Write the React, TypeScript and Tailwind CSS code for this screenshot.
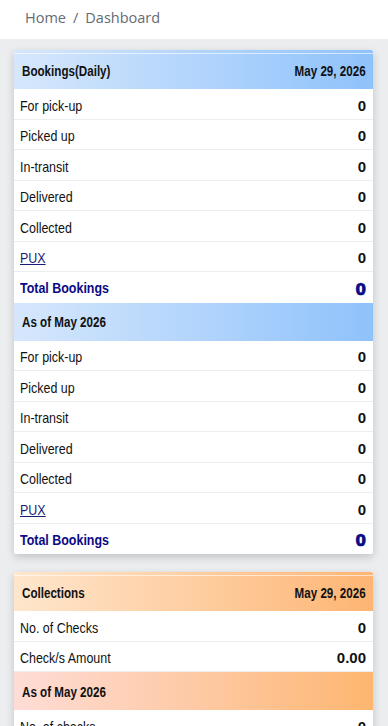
import type { ReactNode } from "react";

type Row = { label: string; value: string; link?: boolean };

const bookingRows: Row[] = [
  { label: "For pick-up", value: "0" },
  { label: "Picked up", value: "0" },
  { label: "In-transit", value: "0" },
  { label: "Delivered", value: "0" },
  { label: "Collected", value: "0" },
  { label: "PUX", value: "0", link: true },
];

// condensed look of the original table font
const narrowL = "inline-block origin-left scale-x-[0.83] font-['Liberation_Sans',Arial,sans-serif]";
const narrowR = "inline-block origin-right scale-x-[0.83] font-['Liberation_Sans',Arial,sans-serif]";

function SectionHeader({
  title,
  date,
  tone,
  first = false,
}: {
  title: string;
  date?: string;
  tone: "blue" | "orange" | "peach";
  first?: boolean;
}) {
  const bg =
    tone === "blue"
      ? "bg-gradient-to-r from-[#d6e7fc] to-[#8fc2fb]"
      : tone === "orange"
        ? "bg-gradient-to-r from-[#fee6cc] to-[#fdb573]"
        : "bg-gradient-to-r from-[#fedcd6] to-[#fdb66f]";
  return (
    <div
      className={`flex items-center justify-between pl-2 pr-[7px] text-[14px] font-bold text-[#111] ${bg} ${
        first ? "h-[39px] pt-[4px]" : "h-[38px] pt-[2px]"
      }`}
    >
      <span className={narrowL}>{title}</span>
      {date && <span className={narrowR}>{date}</span>}
    </div>
  );
}

function DataRow({ label, value, link }: Row) {
  return (
    <div className="flex h-[30.5px] items-center justify-between border-b border-[#eaeef3] pl-[6px] pr-[7px] pt-[4px]">
      <span className={`text-[15px] ${narrowL} ${link ? "text-[#1b1b78] underline" : "text-[#111]"}`}>
        {label}
      </span>
      <span className="font-['Liberation_Sans',Arial,sans-serif] text-[15px] font-bold text-[#111]">
        {value}
      </span>
    </div>
  );
}

function TotalRow() {
  return (
    <div className="flex h-[30.5px] items-center justify-between pl-[6px] pr-[7px] pt-[2px]">
      <span className={`text-[15px] font-bold text-[#0b0b86] ${narrowL}`}>Total Bookings</span>
      <span className="inline-block translate-y-[2px] font-['DejaVu_Sans',sans-serif] text-[15px] font-bold leading-none text-[#0b0b86] [-webkit-text-stroke:0.7px_#0b0b86]">
        0
      </span>
    </div>
  );
}

function Card({ children }: { children: ReactNode }) {
  return (
    <div className="relative overflow-hidden rounded-[2px] bg-white shadow-[0_3px_8px_rgba(0,0,0,0.18)]">
      <div className="absolute inset-x-0 top-[3px] h-px bg-white/60" />
      {children}
    </div>
  );
}

export default function App() {
  return (
    <div className="min-h-[726px] w-[388px] bg-[#ebedef] font-['Open_Sans',sans-serif]">
      <div className="flex h-[39px] items-center bg-white pb-[4px] pl-[25px] text-[14.5px] text-[#646b73]">
        <span>Home</span>
        <span className="px-[7px]">/</span>
        <span>Dashboard</span>
      </div>

      <div className="flex flex-col gap-[18px] pl-[14px] pr-[15px] pt-[11px]">
        <Card>
          <SectionHeader title="Bookings(Daily)" date="May 29, 2026" tone="blue" first />
          {bookingRows.map((r) => (
            <DataRow key={"d" + r.label} {...r} />
          ))}
          <TotalRow />
          <SectionHeader title="As of May 2026" tone="blue" />
          {bookingRows.map((r) => (
            <DataRow key={"m" + r.label} {...r} />
          ))}
          <TotalRow />
        </Card>

        <Card>
          <SectionHeader title="Collections" date="May 29, 2026" tone="orange" first />
          <DataRow label="No. of Checks" value="0" />
          <DataRow label="Check/s Amount" value="0.00" />
          <SectionHeader title="As of May 2026" tone="peach" />
          <DataRow label="No. of checks" value="0" />
          <DataRow label="Check/s Amount" value="0.00" />
        </Card>
      </div>
    </div>
  );
}
